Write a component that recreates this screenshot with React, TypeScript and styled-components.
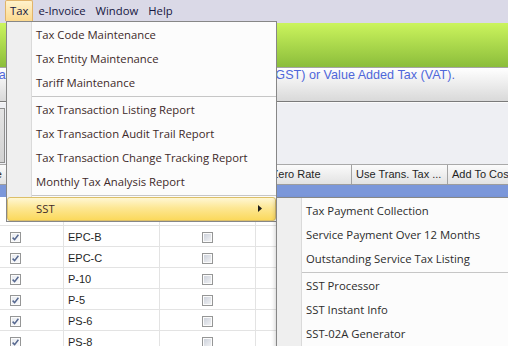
import React from 'react';
import styled, { createGlobalStyle } from 'styled-components';

const GlobalStyle = createGlobalStyle`
  html, body {
    margin: 0;
    padding: 0;
  }
  body {
    width: 508px;
    height: 346px;
    overflow: hidden;
    background: #ffffff;
  }
`;

const Screen = styled.div`
  position: relative;
  width: 508px;
  height: 346px;
  overflow: hidden;
  background: #ffffff;
  font-family: "Liberation Sans", Arial, sans-serif;
`;

const MenuBar = styled.div`
  display: flex;
  height: 23px;
  padding-left: 5px;
  background: #dad9e7;
  font-family: "Open Sans", "Noto Sans", sans-serif;
  font-size: 11.3px;
  color: #16163f;
`;

const BarItem = styled.div<{ $open?: boolean }>`
  display: flex;
  align-items: center;
  box-sizing: border-box;
  height: 21px;
  padding: 0 4px 1px;
  border: 1px solid ${({ $open }) => ($open ? '#e2b46a' : 'transparent')};
  border-bottom: none;
  border-radius: 2px 2px 0 0;
  background: ${({ $open }) => ($open ? 'linear-gradient(#fff2cc, #fcd98f)' : 'transparent')};
`;

const Banner = styled.div`
  height: 44px;
  background: linear-gradient(#cbf45d, #8bbd3b);
`;

const DescBar = styled.div`
  display: flex;
  justify-content: flex-end;
  height: 33px;
  padding-right: 53px;
  overflow: hidden;
  border-top: 1px solid #a6a6a6;
  border-bottom: 1px solid #7a7a7a;
  background: linear-gradient(#ffffff, #d9d9d9);
`;

const DescText = styled.div`
  flex: none;
  white-space: nowrap;
  font-size: 12.6px;
  line-height: 15px;
  color: #4f67da;
`;

const ToolArea = styled.div`
  display: flex;
  align-items: flex-start;
  height: 62px;
  box-sizing: border-box;
  padding-top: 5px;
  border-top: 1px solid #fafafa;
  background: #eeeff3;
`;

const ToolPanel = styled.div`
  width: 4px;
  height: 53px;
  border: 1px solid #8e8e8e;
  border-left: none;
  background: linear-gradient(#e4e4e4, #d2d2d2);
`;

const Grid = styled.div`
  margin-left: -32px;
  font-size: 11px;
  color: #1f1f1f;
`;

const HeaderRow = styled.div`
  display: grid;
  grid-template-columns: repeat(6, 96px);
  border-top: 1px solid #a9a9a9;
  border-bottom: 1px solid #9d9d9d;
  background: linear-gradient(#fbfbfb, #e2e2e2);
`;

const HeaderCell = styled.div`
  height: 19px;
  line-height: 18px;
  padding-left: 4px;
  white-space: nowrap;
  overflow: hidden;
  border-right: 1px solid #a3a3a3;
`;

const GroupBand = styled.div`
  height: 12px;
  background: #7b97da;
`;

const Body = styled.div`
  padding-top: 8px;
  background: #ffffff;
`;

const Row = styled.div`
  display: grid;
  grid-template-columns: repeat(6, 96px);
  height: 21px;
  box-sizing: border-box;
  border-bottom: 1px solid #e3e3e3;
`;

const Cell = styled.div<{ $center?: boolean }>`
  display: flex;
  align-items: center;
  justify-content: ${({ $center }) => ($center ? 'center' : 'flex-start')};
  padding: 2px 0 0 ${({ $center }) => ($center ? '0' : '4px')};
  border-right: 1px solid #e3e3e3;
  white-space: nowrap;
`;

const Box = styled.span<{ $checked?: boolean }>`
  display: flex;
  align-items: center;
  justify-content: center;
  box-sizing: border-box;
  width: 11px;
  height: 11px;
  border: 1px solid #959696;
  box-shadow: inset 0 0 0 1px #fbfbfb;
  background: ${({ $checked }) =>
    $checked ? 'linear-gradient(135deg, #e6e9ee, #fbfbfc)' : 'linear-gradient(135deg, #c9ced8, #f4f5f7)'};
`;

const MenuPanel = styled.div<{ $indent: number }>`
  position: absolute;
  box-sizing: border-box;
  border: 1px solid #878787;
  padding: 1px 0 0;
  font-family: "Open Sans", "Noto Sans", sans-serif;
  font-size: 11.3px;
  background: linear-gradient(
    to right,
    #efefef 0,
    #efefef ${({ $indent }) => $indent}px,
    #dadada ${({ $indent }) => $indent}px,
    #dadada ${({ $indent }) => $indent + 1}px,
    #fcfcfc ${({ $indent }) => $indent + 1}px
  );
`;

const TaxMenu = styled(MenuPanel)`
  left: 6px;
  top: 21px;
  width: 271px;
  color: #3e2a2a;
`;

const SstMenu = styled(MenuPanel)`
  left: 276px;
  top: 197px;
  width: 250px;
  height: 170px;
  color: #2c2c2c;
  box-shadow: -3px 0 4px -2px rgba(0, 0, 0, 0.18);
`;

const Item = styled.div<{ $indent: number; $hot?: boolean }>`
  display: flex;
  align-items: center;
  justify-content: space-between;
  box-sizing: border-box;
  height: 24px;
  padding: 0 13px 1px ${({ $indent }) => $indent}px;
  white-space: nowrap;
  border: 1px solid ${({ $hot }) => ($hot ? '#dcbf68' : 'transparent')};
  border-radius: 3px;
  background: ${({ $hot }) =>
    $hot ? 'linear-gradient(#fff7d3 0%, #fde794 45%, #fbd95c 100%)' : 'transparent'};
`;

const Separator = styled.div<{ $indent: number }>`
  height: 1px;
  margin: 1px 0 1px ${({ $indent }) => $indent}px;
  background: #c6c6c6;
`;

const taxMenu: (string | null)[] = [
  'Tax Code Maintenance',
  'Tax Entity Maintenance',
  'Tariff Maintenance',
  null,
  'Tax Transaction Listing Report',
  'Tax Transaction Audit Trail Report',
  'Tax Transaction Change Tracking Report',
  'Monthly Tax Analysis Report',
  null,
];

const sstMenu: (string | null)[] = [
  'Tax Payment Collection',
  'Service Payment Over 12 Months',
  'Outstanding Service Tax Listing',
  null,
  'SST Processor',
  'SST Instant Info',
  'SST-02A Generator',
];

const headers = ['Active', 'Tax Code', 'Inclusive', 'Is Zero Rate', 'Use Trans. Tax ...', 'Add To Cost'];

const rows = [
  { code: 'EPC', active: true },
  { code: 'EPC-B', active: true },
  { code: 'EPC-C', active: true },
  { code: 'P-10', active: true },
  { code: 'P-5', active: true },
  { code: 'PS-6', active: true },
  { code: 'PS-8', active: true },
];

function CheckBox({ checked }: { checked?: boolean }): JSX.Element {
  return (
    <Box $checked={checked}>
      {checked && (
        <svg width="9" height="9" viewBox="0 0 9 9">
          <path d="M1.6 4.6 L3.6 6.6 L7.4 1.8" fill="none" stroke="#55678f" strokeWidth="1.5" />
        </svg>
      )}
    </Box>
  );
}

function MenuList({ items, indent }: { items: (string | null)[]; indent: number }): JSX.Element {
  return (
    <>
      {items.map((label, i) =>
        label === null ? (
          <Separator key={i} $indent={indent + 1} />
        ) : (
          <Item key={i} $indent={indent + 4}>
            {label}
          </Item>
        ),
      )}
    </>
  );
}

export default function App(): JSX.Element {
  return (
    <>
      <GlobalStyle />
      <Screen>
        <MenuBar>
          <BarItem $open>Tax</BarItem>
          <BarItem>e-Invoice</BarItem>
          <BarItem>Window</BarItem>
          <BarItem>Help</BarItem>
        </MenuBar>
        <Banner />
        <DescBar>
          <DescText>
            This is to maintain Tax Code for Sales and Service Tax (SST), Goods and Services Tax (GST) or Value Added Tax (VAT).
          </DescText>
        </DescBar>
        <ToolArea>
          <ToolPanel />
        </ToolArea>
        <Grid>
          <HeaderRow>
            {headers.map((h) => (
              <HeaderCell key={h}>{h}</HeaderCell>
            ))}
          </HeaderRow>
          <GroupBand />
          <Body>
            {rows.map((r) => (
              <Row key={r.code}>
                <Cell $center>
                  <CheckBox checked={r.active} />
                </Cell>
                <Cell>{r.code}</Cell>
                <Cell $center>
                  <CheckBox />
                </Cell>
                <Cell />
                <Cell />
                <Cell />
              </Row>
            ))}
          </Body>
        </Grid>

        <TaxMenu $indent={24}>
          <MenuList items={taxMenu} indent={24} />
          <Item $indent={28} $hot>
            SST
            <svg width="4" height="7" viewBox="0 0 4 7">
              <path d="M0 0 L4 3.5 L0 7 Z" fill="#1e1e1e" />
            </svg>
          </Item>
        </TaxMenu>

        <SstMenu $indent={24}>
          <MenuList items={sstMenu} indent={24} />
        </SstMenu>
      </Screen>
    </>
  );
}
